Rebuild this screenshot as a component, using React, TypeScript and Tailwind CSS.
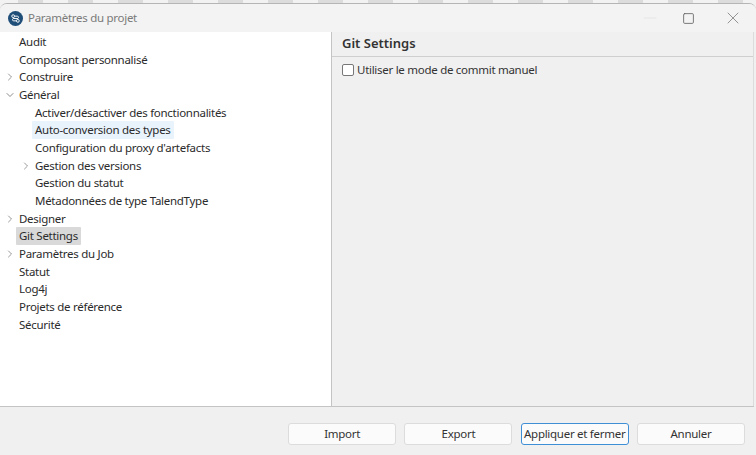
import { ChevronDown, ChevronRight, Minus, Square, X } from "lucide-react";

type Row = { label: string; level: number; arrow?: "open" | "closed"; hover?: boolean; selected?: boolean };

const rows: Row[] = [
  { label: "Audit", level: 0 },
  { label: "Composant personnalisé", level: 0 },
  { label: "Construire", level: 0, arrow: "closed" },
  { label: "Général", level: 0, arrow: "open" },
  { label: "Activer/désactiver des fonctionnalités", level: 1 },
  { label: "Auto-conversion des types", level: 1, hover: true },
  { label: "Configuration du proxy d'artefacts", level: 1 },
  { label: "Gestion des versions", level: 1, arrow: "closed" },
  { label: "Gestion du statut", level: 1 },
  { label: "Métadonnées de type TalendType", level: 1 },
  { label: "Designer", level: 0, arrow: "closed" },
  { label: "Git Settings", level: 0, selected: true },
  { label: "Paramètres du Job", level: 0, arrow: "closed" },
  { label: "Statut", level: 0 },
  { label: "Log4j", level: 0 },
  { label: "Projets de référence", level: 0 },
  { label: "Sécurité", level: 0 },
];

function TreeRow({ row }: { row: Row }) {
  return (
    <div className={`flex h-[17.7px] items-center ${row.level === 1 ? "pl-[20px]" : "pl-1"}`}>
      <span className="flex w-[12px] justify-center text-[#6e6e6e]">
        {row.arrow === "closed" && <ChevronRight size={14} strokeWidth={1.4} />}
        {row.arrow === "open" && <ChevronDown size={14} strokeWidth={1.6} />}
      </span>
      <span
        className={`rounded-[1px] px-[3px] leading-[18px] text-[#2b2b2b] ${row.hover ? "bg-[#e8f3fc]" : ""} ${
          row.selected ? "bg-[#d9d9d9]" : ""
        }`}
      >
        {row.label}
      </span>
    </div>
  );
}

function FooterButton({ label, focused }: { label: string; focused?: boolean }) {
  return (
    <button
      className={`h-[22px] w-[108px] whitespace-nowrap rounded-[3px] border bg-[#fbfbfb] p-0 text-[#333] ${
        focused ? "border-[#3f8fd6]" : "border-[#dcdcdc]"
      }`}
    >
      {label}
    </button>
  );
}

export default function App() {
  return (
    <div className="h-[455px] w-[756px] overflow-hidden bg-[repeating-linear-gradient(90deg,#f2f2f2_0,#f2f2f2_18px,#dcdcdc_18px,#dcdcdc_43px,#f2f2f2_43px,#f2f2f2_50px)] pt-[3px] font-['Noto_Sans',sans-serif] text-[11.5px] tracking-[-0.28px]">
      <div className="flex h-[452px] flex-col overflow-hidden rounded-t-[7px] border-t border-[#b5b5b5] bg-[#f0f0f0] pr-[2px]">
        {/* Title bar */}
        <div className="-mr-[2px] flex h-[28px] shrink-0 items-center bg-[#f3f3f3] pl-[8px]">
          <svg width="15" height="15" viewBox="0 0 16 16">
            <circle cx="8" cy="8" r="8" fill="#1f4e79" />
            <circle cx="5.5" cy="5.5" r="1.5" fill="none" stroke="#fff" strokeWidth="1" />
            <circle cx="10.5" cy="10.5" r="1.5" fill="none" stroke="#fff" strokeWidth="1" />
            <path d="M7 5.5h3.5a1.5 1.5 0 0 1 0 2.5H5.5a1.5 1.5 0 0 0 0 2.5H9" fill="none" stroke="#fff" strokeWidth="1" />
          </svg>
          <span className="ml-[5px] text-[#7a7a7a]">Paramètres du projet</span>
          <div className="ml-auto flex items-center">
            <Minus size={20} strokeWidth={1} className="text-[#e2e2e2]" />
            <Square size={13} strokeWidth={1.6} className="ml-[22px] text-[#666]" />
            <X size={20} strokeWidth={1.1} className="ml-[28px] mr-[13px] text-[#8a8a8a]" />
          </div>
        </div>

        {/* Main */}
        <div className="flex min-h-0 flex-1 border-r border-[#dcdcdc]">
          <div className="w-[331px] shrink-0 bg-white pt-[1px]">
            {rows.map((row) => (
              <TreeRow key={row.label} row={row} />
            ))}
          </div>
          <div className="flex flex-1 flex-col border-l border-[#c4c4c4] bg-[#f0f0f0]">
            <div className="flex h-[25px] items-center border-b border-[#cfcfcf] pl-[10px] text-[13px] font-semibold tracking-normal text-[#333]">
              Git Settings
            </div>
            <label className="mt-[4px] flex items-center pl-[10px] text-[#333]">
              <span className="h-[12px] w-[12px] rounded-[2px] border border-[#777] bg-white" />
              <span className="ml-[3px]">Utiliser le mode de commit manuel</span>
            </label>
          </div>
        </div>

        {/* Footer */}
        <div className="flex h-[49px] shrink-0 items-start justify-end gap-[8.3px] border-t border-[#c4c4c4] pr-[9px] pt-[16px]">
          <FooterButton label="Import" />
          <FooterButton label="Export" />
          <FooterButton label="Appliquer et fermer" focused />
          <FooterButton label="Annuler" />
        </div>
      </div>
    </div>
  );
}
